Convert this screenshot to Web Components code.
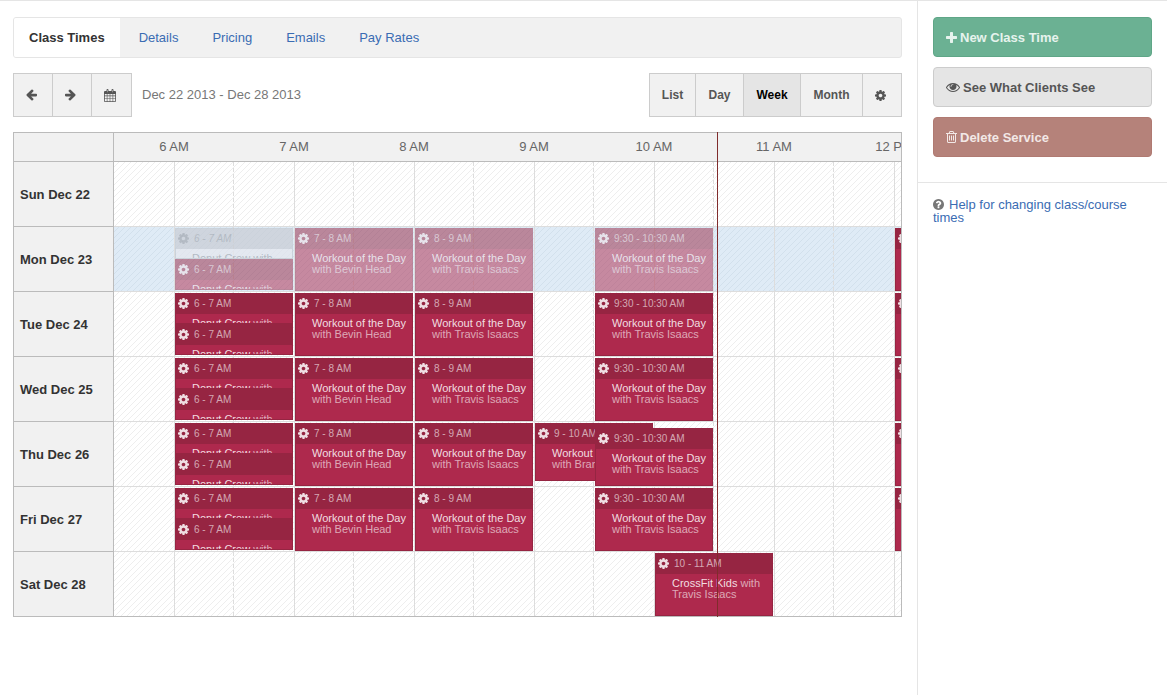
<!DOCTYPE html>
<html lang="en">
<head>
<meta charset="utf-8">
<title>Class Times</title>
<style>
  body { margin: 0; font: 13px/18px "Liberation Sans", Arial, sans-serif; color: #333; background: #fff; }
</style>
</head>
<body>
<app-shell>
  <tab-bar>
    <tab-link active>Class Times</tab-link>
    <tab-link>Details</tab-link>
    <tab-link>Pricing</tab-link>
    <tab-link>Emails</tab-link>
    <tab-link>Pay Rates</tab-link>
  </tab-bar>
  <calendar-toolbar></calendar-toolbar>
  <week-calendar></week-calendar>
  <side-actions slot="side">
    <action-button kind="primary" icon="plus">New Class Time</action-button>
    <action-button kind="default" icon="eye">See What Clients See</action-button>
    <action-button kind="danger" icon="trash">Delete Service</action-button>
    <help-link slot="help">Help for changing class/course times</help-link>
  </side-actions>
</app-shell>

<script>
const define = (name, html, setup) => {
  const template = document.createElement('template');
  customElements.define(name, class extends HTMLElement {
    connectedCallback() {
      if (this.shadowRoot) return;
      template.innerHTML = typeof html === 'function' ? html(this) : html;
      this.attachShadow({ mode: 'open' }).append(template.content.cloneNode(true));
      if (setup) setup(this);
    }
  });
};

const COG = '<path d="M1152 896q0-106-75-181t-181-75-181 75-75 181 75 181 181 75 181-75 75-181zm512-109v222q0 12-8 23t-20 13l-185 28q-19 54-39 91 35 50 107 138 10 12 10 25t-9 23q-27 37-99 108t-94 71q-12 0-26-9l-138-108q-44 23-91 38-16 136-29 186-7 28-36 28h-222q-14 0-24.5-8.5t-11.5-21.5l-28-184q-49-16-90-37l-141 107q-10 9-25 9-14 0-25-11-126-114-165-168-7-10-7-23 0-12 8-23 15-21 51-66.5t54-70.5q-27-50-41-99l-183-27q-13-2-21-12.5t-8-23.5v-222q0-12 8-23t19-13l186-28q14-46 39-92-40-57-107-138-10-12-10-24 0-10 9-23 26-36 98.5-107.5t94.5-71.5q13 0 26 10l138 107q44-23 91-38 16-136 29-186 7-28 36-28h222q14 0 24.5 8.5t11.5 21.5l28 184q49 16 90 37l142-107q9-9 24-9 13 0 25 10 129 119 165 170 7 8 7 22 0 12-8 23-15 21-51 66.5t-54 70.5q26 50 41 98l183 28q13 2 21 12.5t8 23.5z"/>';
const ARROW = 'M1664 896v128q0 53-32.5 90.5t-84.5 37.5h-704l293 294q38 36 38 90t-38 90l-75 76q-37 37-90 37-52 0-91-37l-651-652q-37-37-37-90 0-52 37-91l651-650q38-38 91-38 52 0 90 38l75 74q38 38 38 91t-38 91l-293 293h704q52 0 84.5 37.5t32.5 90.5z';
const ICONS = {
  cog: ['128 128 1536 1536', 11, 11, COG],
  left: ['128 128 1536 1664', 11, 12, `<path d="${ARROW}"/>`],
  right: ['128 128 1536 1664', 11, 12, `<path transform="translate(1792 0) scale(-1 1)" d="${ARROW}"/>`],
  calendar: ['0 0 12 13', 12, 13, '<path fill-rule="evenodd" d="M1 2h1.500V1a1 1 0 0 1 2 0v1h3V1a1 1 0 0 1 2 0v1H11a1 1 0 0 1 1 1v9a1 1 0 0 1-1 1H1a1 1 0 0 1-1-1V3a1 1 0 0 1 1-1zM.8 4.900v1.700h2V4.900zm2.600 0v1.700h2.300V4.900zm2.900 0v1.700h2.300V4.900zm2.900 0v1.700h2V4.900zM.8 7.200v2.200h2V7.200zm2.600 0v2.200h2.300V7.200zm2.900 0v2.200h2.300V7.200zm2.900 0v2.200h2V7.200zM.8 10v2.200h2V10zm2.600 0v2.200h2.300V10zm2.900 0v2.200h2.300V10zm2.900 0v2.200h2V10zM3.300 1v2.200h.4V1zm5 0v2.200h.4V1z"/>'],
  plus: ['192 128 1408 1408', 11, 11, '<path d="M1600 736v192q0 40-28 68t-68 28h-416v416q0 40-28 68t-68 28h-192q-40 0-68-28t-28-68v-416h-416q-40 0-68-28t-28-68v-192q0-40 28-68t68-28h416v-416q0-40 28-68t68-28h192q40 0 68 28t28 68v416h416q40 0 68 28t28 68z"/>'],
  eye: ['0 256 1792 1408', 14, 11, '<path d="M1664 960q-152-236-381-353 61 104 61 225 0 185-131.500 316.500t-316.500 131.500-316.500-131.500-131.500-316.500q0-121 61-225-229 117-381 353 133 205 333.500 326.500t434.500 121.500 434.500-121.500 333.500-326.500zm-720-384q0-20-14-34t-34-14q-125 0-214.500 89.500t-89.500 214.500q0 20 14 34t34 14 34-14 14-34q0-86 61-147t147-61q20 0 34-14t14-34zm848 384q0 34-20 69-140 230-376.500 368.500t-499.500 138.500-499.500-139-376.500-368q-20-35-20-69t20-69q140-229 376.500-368t499.500-139 499.500 139 376.500 368q20 35 20 69z"/>'],
  trash: ['192 128 1408 1536', 11, 12, '<path d="M704 736v576q0 14-9 23t-23 9h-64q-14 0-23-9t-9-23v-576q0-14 9-23t23-9h64q14 0 23 9t9 23zm256 0v576q0 14-9 23t-23 9h-64q-14 0-23-9t-9-23v-576q0-14 9-23t23-9h64q14 0 23 9t9 23zm256 0v576q0 14-9 23t-23 9h-64q-14 0-23-9t-9-23v-576q0-14 9-23t23-9h64q14 0 23 9t9 23zm128 724v-948h-896v948q0 22 7 40.500t14.500 27 10.500 8.500h832q3 0 10.500-8.500t14.500-27 7-40.500zm-672-1076h448l-48-117q-7-9-17-11h-317q-10 2-17 11zm928 32v64q0 14-9 23t-23 9h-96v948q0 83-47 143.500t-113 60.500h-832q-66 0-113-58.500t-47-141.500v-952h-96q-14 0-23-9t-9-23v-64q0-14 9-23t23-9h309l70-167q15-37 54-63t79-26h320q40 0 79 26t54 63l70 167h309q14 0 23 9t9 23z"/>'],
  question: ['128 128 1536 1536', 11, 11, '<path d="M1024 1376v-192q0-14-9-23t-23-9h-192q-14 0-23 9t-9 23v192q0 14 9 23t23 9h192q14 0 23-9t9-23zm256-672q0-88-55.500-163t-138.500-116-170-41q-243 0-371 213-15 24 8 42l132 100q7 6 19 6 16 0 25-12 53-68 86-92 34-24 86-24 48 0 85.500 26t37.500 59q0 38-20 61t-68 45q-63 28-115.500 86.500t-52.500 125.500v36q0 14 9 23t23 9h192q14 0 23-9t9-23q0-19 21.500-49.500t54.500-49.500q32-18 49-28.500t46-35 44.500-48 28-60.500 12.500-81zm384 192q0 209-103 385.500t-279.500 279.500-385.500 103-385.500-103-279.500-279.500-103-385.500 103-385.500 279.500-279.500 385.500-103 385.500 103 279.500 279.500 103 385.500z"/>']
};

define('fa-icon', el => {
  const [box, w, h, body] = ICONS[el.getAttribute('name')];
  return `<style>:host{display:inline-block;flex:none} svg{display:block;fill:currentColor}</style>
  <svg viewBox="${box}" width="${w}" height="${h}" aria-hidden="true">${body}</svg>`;
});

define('app-shell', `<style>
  :host { display: grid; grid-template-columns: minmax(0, 1fr) 250px; min-height: 100vh; box-sizing: border-box; border-top: 1px solid #e5e5e5; }
  main { display: flex; flex-direction: column; gap: 15px; padding: 16px 15px 15px 13px; }
</style><main><slot></slot></main><slot name="side"></slot>`);

define('tab-bar', `<style>
  :host { display: block; }
  nav { display: flex; gap: 4px; height: 39px; border: 1px solid #e5e5e5; border-radius: 3px; background: #f1f1f1; overflow: hidden; }
</style><nav><slot></slot></nav>`);

define('tab-link', `<style>
  :host { display: flex; }
  a { padding: 0 15px; line-height: 39px; color: #3a6cb3; text-decoration: none; }
  :host([active]) a { background: #fff; color: #333; font-weight: bold; }
</style><a href="#"><slot></slot></a>`);

define('calendar-toolbar', `<style>
  :host { display: flex; align-items: center; height: 44px; }
  .group { display: flex; height: 44px; }
  button { box-sizing: border-box; width: var(--w); padding: 0; display: flex; align-items: center; justify-content: center;
    border: 1px solid #ccc; border-right-width: 0; background: #f1f1f1; color: #555; font: bold 12px/16px "Liberation Sans", Arial, sans-serif; }
  button:last-child { border-right-width: 1px; }
  button[aria-label] { padding-right: 3px; }
  button[aria-pressed=true] { background: #e5e5e5; color: #000; }
  .range { flex: 1; margin-left: 10px; color: #777; }
</style>
<div class="group">
  <button style="--w:39px" aria-label="Previous week"><fa-icon name="left"></fa-icon></button>
  <button style="--w:39px" aria-label="Next week"><fa-icon name="right"></fa-icon></button>
  <button style="--w:41px" aria-label="Choose date"><fa-icon name="calendar"></fa-icon></button>
</div>
<span class="range">Dec 22 2013 - Dec 28 2013</span>
<div class="group">
  <button style="--w:46px">List</button>
  <button style="--w:48px">Day</button>
  <button style="--w:57px" aria-pressed="true">Week</button>
  <button style="--w:62px">Month</button>
  <button style="--w:40px" aria-label="Settings"><fa-icon name="cog"></fa-icon></button>
</div>`);

define('class-event', `<style>
  :host { display: block; box-sizing: border-box; height: 63px; margin: 1px 1px 0; overflow: hidden;
    border: 1px solid #962542; background: #ae294d; color: rgba(255,255,255,.6); font-size: 11px; line-height: 11px; }
  :host([half]) { height: 31px; margin: 0; }
  :host([short]) { height: 58px; }
  :host([low]) { margin-top: 6px; }
  :host([faded]) { opacity: .5; }
  :host([cancelled]) { border-color: #c3c9d0; background: #e6e7ee; color: #a2a7b0; opacity: .7; }
  header { box-sizing: border-box; display: flex; align-items: center; gap: 5px; height: 20px; padding: 0 0 2px 2px; background: #962542; font-size: 10px; white-space: nowrap; }
  :host([cancelled]) header { background: #c9cdd4; font-style: italic; }
  button { padding: 0; border: 0; background: none; color: rgba(255,255,255,.85); display: flex; }
  :host([cancelled]) button, :host([cancelled]) ::slotted(b) { color: #a2a7b0; }
  .text { padding: 4px 0 0 16px; }
  ::slotted(b) { font-weight: normal; color: rgba(255,255,255,.85); }
</style>
<header><button aria-label="Class options"><fa-icon name="cog"></fa-icon></button><span id="time"></span></header>
<div class="text"><slot></slot></div>`, el => {
  el.shadowRoot.getElementById('time').textContent = el.getAttribute('time');
});

define('day-row', el => `<style>
  :host { display: flex; height: 65px; --line: #ddd; }
  :host(:last-of-type) { --line: #bbb; }
  .day { box-sizing: border-box; width: 100px; flex: none; padding: 2px 0 0 6px; line-height: 62px; font-weight: bold;
    border-right: 1px solid #bbb; border-bottom: 1px solid #bbb; background: #f1f1f1; }
  .track { flex: 1; min-width: 0; overflow: hidden; display: grid; grid-template-columns: repeat(14, 60px); grid-template-rows: 64px;
    border-bottom: 1px solid var(--line);
    background:
      linear-gradient(90deg, #ddd 1px, transparent 1px) 60px 0 / 120px 100%,
      conic-gradient(from 270deg at 1px 4px, #ddd 25%, transparent 0) 119px 0 / 120px 6px,
      linear-gradient(135deg, transparent 38%, var(--hatch) 38% 50%, transparent 50% 88%, var(--hatch) 88%) 0 0 / 6px 6px,
      var(--base);
    --base: #fff; --hatch: #eee; }
  :host([today]) .track { --base: #dfebf6; --hatch: #d2e0ec; }
  ::slotted(*) { grid-row: 1; grid-column: var(--at) / span 2; align-self: start; }
</style><div class="day">${el.getAttribute('day')}</div><div class="track"><slot></slot></div>`);

define('event-stack', `<style>:host{display:flex;flex-direction:column;margin:1px 1px 0}</style><slot></slot>`);

const event = (at, time, name, who, flags = '') =>
  `<class-event style="--at:${at}" time="${time}" ${flags}><b>${name}</b> with ${who}</class-event>`;
const donut = flags => event(2, '6 - 7 AM', 'Donut Crew', '', 'half ' + flags);
const stack = (first = '', second = '') => `<event-stack style="--at:2">${donut(first)}${donut(second)}</event-stack>`;
const workouts = (flags = '', late = '', extra = '') =>
  event(4, '7 - 8 AM', 'Workout of the Day', 'Bevin Head', flags) +
  event(6, '8 - 9 AM', 'Workout of the Day', 'Travis Isaacs', flags) + extra +
  event(9, '9:30 - 10:30 AM', 'Workout of the Day', 'Travis Isaacs', flags + late) +
  '<class-event style="--at:14" time=""></class-event>';
const hours = ['6 AM', '7 AM', '8 AM', '9 AM', '10 AM', '11 AM', '12 PM'];

define('week-calendar', `<style>
  :host { display: block; position: relative; border: 1px solid #bbb; border-bottom: 0; }
  .hours { display: flex; height: 28px; border-bottom: 1px solid #bbb; background: #f1f1f1; color: #666; line-height: 28px; }
  .corner { width: 99px; flex: none; border-right: 1px solid #bbb; }
  .labels { flex: 1; min-width: 0; display: flex; overflow: hidden; }
  .labels span { flex: none; width: 120px; text-align: center; }
  .now { position: absolute; top: -1px; bottom: 0; left: 703px; width: 1px; background: #802c2c; }
</style>
<div class="hours"><div class="corner"></div><div class="labels">${hours.map(h => `<span>${h}</span>`).join('')}</div></div>
<day-row day="Sun Dec 22"></day-row>
<day-row day="Mon Dec 23" today>${stack('cancelled', 'faded')}${workouts('faded')}</day-row>
<day-row day="Tue Dec 24">${stack()}${workouts()}</day-row>
<day-row day="Wed Dec 25">${stack()}${workouts()}</day-row>
<day-row day="Thu Dec 26">${stack()}${workouts('', 'short low', event(8, '9 - 10 AM', 'Workout of the Day', 'Brandon', 'short'))}</day-row>
<day-row day="Fri Dec 27">${stack()}${workouts()}</day-row>
<day-row day="Sat Dec 28">${event(10, '10 - 11 AM', 'CrossFit Kids', 'Travis Isaacs')}</day-row>
<div class="now"></div>`);

define('side-actions', `<style>
  :host { display: block; border-left: 1px solid #e5e5e5; }
  .actions { display: flex; flex-direction: column; gap: 10px; padding: 16px 15px 25px; border-bottom: 1px solid #e5e5e5; }
  .help { padding: 15px; }
</style><div class="actions"><slot></slot></div><div class="help"><slot name="help"></slot></div>`);

define('action-button', el => `<style>
  :host { display: block; --bg: #e5e5e5; --edge: #ccc; --ink: #555; }
  :host([kind=primary]) { --bg: #6bb193; --edge: #5fa687; --ink: #e6f3ed; }
  :host([kind=danger]) { --bg: #b5827a; --edge: #b07a72; --ink: #f2e8e6; }
  button { box-sizing: border-box; width: 100%; height: 40px; display: flex; align-items: center; gap: 3px; padding: 0 12px;
    border: 1px solid var(--edge); border-radius: 4px; background: var(--bg); color: var(--ink); font: inherit; font-weight: bold; }
  span { padding-top: 2px; }
</style><button><fa-icon name="${el.getAttribute('icon')}"></fa-icon><span><slot></slot></span></button>`);

define('help-link', `<style>
  :host { display: block; line-height: 13px; color: #777; }
  fa-icon { vertical-align: -1px; margin-right: 5px; }
  a { color: #3a6cb3; text-decoration: none; }
</style><fa-icon name="question"></fa-icon><a href="#"><slot></slot></a>`);
</script>
</body>
</html>
